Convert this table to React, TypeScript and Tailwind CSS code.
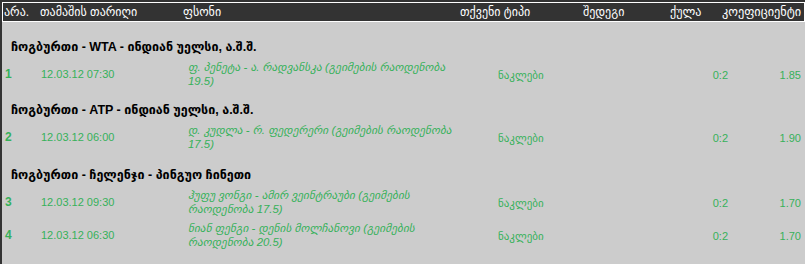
import React from "react";

const font = { fontFamily: '"Liberation Sans", "DejaVu Sans", Arial, sans-serif' };

type Row = { n: string; date: string; l1: string; l2: string; coef: string };
type Section = { title: string; rows: Row[] };

const sections: Section[] = [
  {
    title: "ჩოგბურთი - WTA - ინდიან უელსი, ა.შ.შ.",
    rows: [
      { n: "1", date: "12.03.12 07:30", l1: "ფ. პენეტა - ა. რადვანსკა (გეიმების რაოდენობა", l2: "19.5)", coef: "1.85" },
    ],
  },
  {
    title: "ჩოგბურთი - ATP - ინდიან უელსი, ა.შ.შ.",
    rows: [
      { n: "2", date: "12.03.12 06:00", l1: "დ. კუდლა - რ. ფედერერი (გეიმების რაოდენობა", l2: "17.5)", coef: "1.90" },
    ],
  },
  {
    title: "ჩოგბურთი - ჩელენჯი - პინგუო ჩინეთი",
    rows: [
      { n: "3", date: "12.03.12 09:30", l1: "ჰუფუ ვონგი - ამირ ვეინტრაუბი (გეიმების", l2: "რაოდენობა 17.5)", coef: "1.70" },
      { n: "4", date: "12.03.12 06:30", l1: "ნიან ფენგი - დენის მოლჩანოვი (გეიმების", l2: "რაოდენობა 20.5)", coef: "1.70" },
    ],
  },
];

export default function App() {
  return (
    <div className="w-[805px] h-[264px] overflow-hidden bg-[#333333] pl-[2px] pt-[2px]" style={font}>
      <div className="flex h-[20px] items-center border border-white bg-[#333333] pl-[1px] text-[12px] text-white">
        <span className="w-[36px] shrink-0">არა.</span>
        <span className="w-[143px] shrink-0">თამაშის თარიღი</span>
        <span className="w-[277px] shrink-0">ფსონი</span>
        <span className="w-[123px] shrink-0">თქვენი ტიპი</span>
        <span className="w-[87px] shrink-0">შედეგი</span>
        <span className="w-[52px] shrink-0">ქულა</span>
        <span className="shrink-0 whitespace-nowrap text-[12.3px]">კოეფიციენტი</span>
      </div>
      <div className="h-full bg-[#cccccc] pt-[5px]">
        {sections.map((s, i) => (
          <div key={s.title}>
            <div
              className={`pl-[9px] pb-[3px] text-[12.5px] font-bold leading-[14px] text-black ${
                i === 2 ? "pt-[15px]" : "pt-[13px]"
              }`}
            >
              {s.title}
            </div>
            {s.rows.map((r) => (
              <div key={r.n} className="flex h-[33px] items-center text-[11px] leading-[14px] text-[#36b15a]">
                <span className="w-[39px] shrink-0 pl-[3px] text-[12px] font-bold">{r.n}</span>
                <span className="w-[147px] shrink-0">{r.date}</span>
                <span className="w-[310px] shrink-0 text-[11.4px] italic">
                  <span className="block whitespace-nowrap">{r.l1}</span>
                  <span className="block whitespace-nowrap">{r.l2}</span>
                </span>
                <span className="w-[162px] shrink-0 pt-[3px]">ნაკლები</span>
                <span className="w-[70px] shrink-0 pt-[3px] pr-[2px] text-right">0:2</span>
                <span className="w-[73px] shrink-0 pt-[3px] pr-[2px] text-right">{r.coef}</span>
              </div>
            ))}
          </div>
        ))}
      </div>
    </div>
  );
}
